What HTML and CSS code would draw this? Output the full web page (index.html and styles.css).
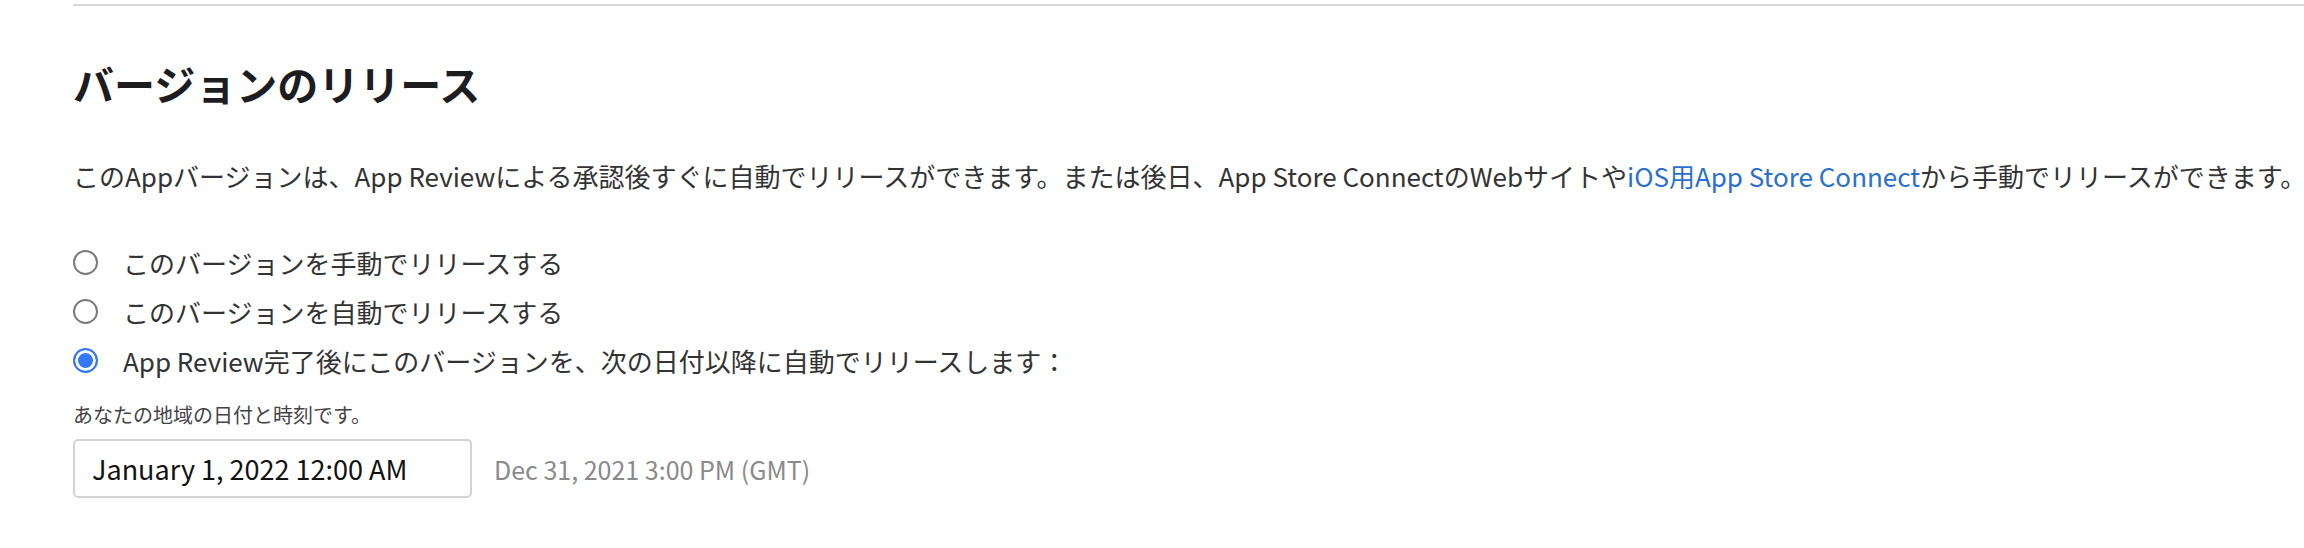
FILE: index.html
```html
<!DOCTYPE html>
<html lang="ja">
<head>
  <meta charset="UTF-8">
  <title>バージョンのリリース</title>
  <link rel="stylesheet" href="styles.css">
</head>
<body>
  <div class="rule"></div>
  <div class="section">
    <h1>バージョンのリリース</h1>
    <p class="intro">このAppバージョンは、App Reviewによる承認後すぐに自動でリリースができます。または後日、App Store ConnectのWebサイトや<a href="#">iOS用App Store Connect</a>から手動でリリースができます。</p>

    <div class="options">
      <label class="option">
        <input type="radio" name="release">
        <span>このバージョンを手動でリリースする</span>
      </label>
      <label class="option">
        <input type="radio" name="release">
        <span>このバージョンを自動でリリースする</span>
      </label>
      <label class="option">
        <input type="radio" name="release" checked>
        <span>App Review完了後にこのバージョンを、次の日付以降に自動でリリースします：</span>
      </label>
    </div>

    <div class="hint">あなたの地域の日付と時刻です。</div>
    <div class="date-row">
      <input class="date-input" type="text" value="January 1, 2022 12:00 AM">
      <span class="gmt">Dec 31, 2021 3:00 PM (GMT)</span>
    </div>
  </div>
</body>
</html>
```

FILE: styles.css
```css
body {
  margin: 0;
  font-family: "Noto Sans CJK JP", "Noto Sans", sans-serif;
  color: #333;
  background: #fff;
}
.rule {
  margin: 4px 0 0 73px;
  border-top: 2px solid #d6d6d6;
}
.section {
  padding-left: 73px;
}
h1 {
  margin: 53px 0 0;
  font-size: 41px;
  line-height: 49px;
  font-weight: 700;
  color: #1d1d1f;
}
.intro {
  margin: 50px 0 0;
  font-size: 26px;
  line-height: 36px;
  white-space: nowrap;
}
.intro a {
  color: #2a6fd2;
  text-decoration: none;
}
.options {
  margin-top: 44px;
}
.option {
  display: flex;
  align-items: center;
  height: 49px;
  font-size: 26px;
}
.option input {
  appearance: none;
  -webkit-appearance: none;
  width: 25px;
  height: 25px;
  margin: 0 25px 0 0;
  border: 2px solid #7a7a7a;
  border-radius: 50%;
  background: #fff;
}
.option input:checked {
  border-color: #3478f6;
  background: #3478f6;
  box-shadow: inset 0 0 0 3px #fff;
}
.hint {
  margin-top: 17px;
  font-size: 20px;
  line-height: 26px;
  color: #444;
}
.date-row {
  display: flex;
  align-items: center;
  margin-top: 11px;
}
.date-input {
  box-sizing: border-box;
  width: 399px;
  height: 59px;
  padding: 0 17px;
  border: 2px solid #d4d4d4;
  border-radius: 5px;
  font-family: inherit;
  font-size: 27px;
  color: #111;
}
.gmt {
  margin-left: 22px;
  font-size: 25px;
  color: #8a8a8a;
}
```
